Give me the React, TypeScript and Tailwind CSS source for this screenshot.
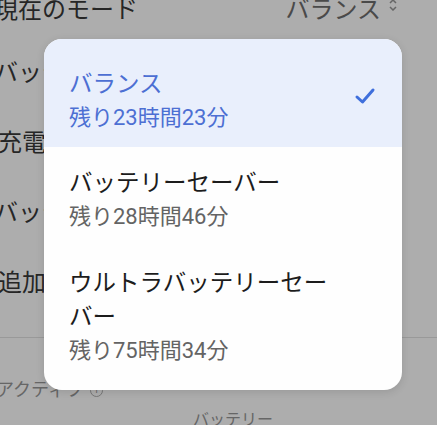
import React from "react";

const font = { fontFamily: 'Roboto, "Noto Sans CJK JP", sans-serif' };

export default function App() {
  return (
    <div
      className="relative w-[437px] h-[425px] overflow-hidden bg-[#adadad] text-[#262626]"
      style={font}
    >
      {/* background page (dimmed) */}
      <div className="flex flex-col">
        <div className="flex justify-between items-center h-[24px] mt-[-2px] pr-[40px]">
          <span className="ml-[-6px] text-[24px] leading-[24px]">現在のモード</span>
          <span className="flex items-center gap-[8px] text-[24px] leading-[24px] text-[#4a4a4a]">
            バランス
            <svg width="8" height="12" viewBox="0 0 8 12" className="mt-[-10px]">
              <path d="M1 4 L4 1 L7 4 M1 8 L4 11 L7 8" stroke="#666" strokeWidth="1.5" fill="none" />
            </svg>
          </span>
        </div>
        <div className="flex flex-col gap-[46px] mt-[39px] ml-[-6px] text-[24px] leading-[24px]">
          <span className="h-[24px]">バッテリー</span>
          <span className="h-[24px] ml-[4px]">充電の上限</span>
          <span className="h-[24px]">バッテリー</span>
          <span className="h-[24px] ml-[4px]">追加設定</span>
        </div>
        <div className="h-px bg-[#999999] mt-[42px]" />
        <div className="flex items-center gap-[6px] mt-[43px] ml-[-4px] text-[18px] leading-[18px] text-[#666]">
          <span>アクティブ</span>
          <span className="w-[13px] h-[13px] rounded-full border border-[#777] text-[9px] leading-[11px] text-center">i</span>
        </div>
        <div className="flex mt-[13px] pl-[193px] text-[16px] leading-[16px] text-[#666]">
          <span>バッテリー</span>
        </div>
        <div className="flex items-center mt-[-2px] text-[22px] leading-[22px]">
          <span className="ml-[0px] text-[#222]">スクリーン</span>
          <span className="ml-[66px] w-[8px] h-[8px] rounded-full bg-[#4a6fd0]" />
          <span className="ml-[104px] w-[8px] h-[8px] rounded-full bg-[#3f9a55]" />
          <span className="ml-[6px] text-[16px] text-[#555]">充電</span>
        </div>
      </div>

      {/* menu overlay */}
      <div className="absolute left-[44px] top-[39px] w-[358px] h-[351px] rounded-[18px] bg-[#fefefe] overflow-hidden shadow-[0_2px_8px_rgba(0,0,0,0.12)]">
        <div className="flex items-center bg-[#e9effc] pl-[25px] pr-[26px] pt-[29px] pb-[13px]">
          <div className="flex-1 flex flex-col">
            <span className="text-[23.5px] leading-[33px] text-[#4d6fd3]">バランス</span>
            <span className="text-[22px] leading-[33px] text-[#4d6fd3]">残り23時間23分</span>
          </div>
          <svg width="22" height="20" viewBox="0 0 22 20" className="mt-[-10px]">
            <path d="M3 11 L8.5 16 L19 4" stroke="#3f6fdc" strokeWidth="3" fill="none" strokeLinecap="round" strokeLinejoin="round" />
          </svg>
        </div>
        <div className="flex flex-col pl-[25px] pr-[26px] pt-[20px] pb-[17px]">
          <span className="text-[23.5px] leading-[33px] text-[#1c1c1c]">バッテリーセーバー</span>
          <span className="text-[22px] leading-[33px] text-[#646464]">残り28時間46分</span>
        </div>
        <div className="flex flex-col pl-[25px] pr-[63px] pt-[16px]">
          <span className="text-[23.5px] leading-[34px] text-[#1c1c1c]">ウルトラバッテリーセーバー</span>
          <span className="text-[22px] leading-[33px] text-[#646464]">残り75時間34分</span>
        </div>
      </div>
    </div>
  );
}
